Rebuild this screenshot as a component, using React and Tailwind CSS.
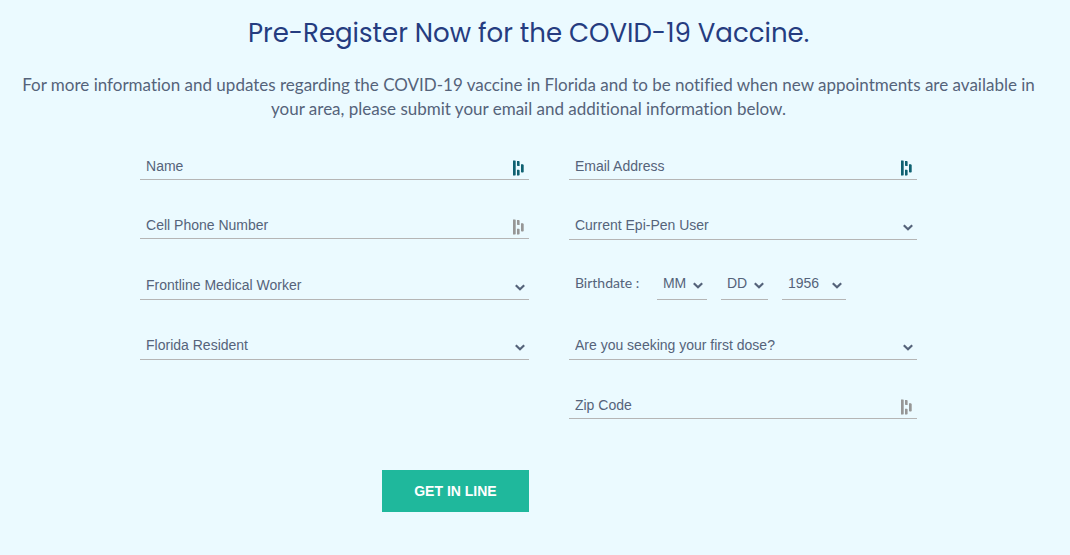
import React from 'react';

const fieldStyles =
  'w-full appearance-none rounded-none border-b border-[#b5b5b5] bg-transparent px-1.5 font-["Liberation_Sans",Arial,sans-serif] text-sm leading-5 text-[#55637a] outline-none placeholder:text-[#55637a] placeholder:opacity-100';

const AutofillIcon = ({ className = '' }) => (
  <svg
    viewBox="0 0 11 16"
    className={`pointer-events-none absolute h-4 w-[11px] ${className}`}
    fill="currentColor"
    aria-hidden="true"
  >
    <path d="M0 .4h2.2l.5.6v14l-.5.5H0z" />
    <path d="M4 .9h1.9l.7.7V6H4.6L4 5.4z" />
    <path d="M4 9.7h1.9l.7.5V15l-.7.5H4z" />
    <path d="M8 4.2h1.9l.8.7v7l-.7.6H8.6L8 11.9z" />
  </svg>
);

const ChevronIcon = ({ className = 'bottom-[9px]' }) => (
  <svg
    viewBox="0 0 10 7"
    className={`pointer-events-none absolute right-1 h-[7px] w-2.5 ${className}`}
    fill="none"
    stroke="#55637a"
    strokeWidth="2.2"
    aria-hidden="true"
  >
    <path d="M.8 1.2 5 5.2l4.2-4" />
  </svg>
);

const TextField = ({ label, type = 'text', active = false }) => (
  <div className="relative">
    <input
      type={type}
      aria-label={label}
      placeholder={label}
      className={`${fieldStyles} block h-7`}
    />
    <AutofillIcon
      className={`right-[5px] bottom-1 ${active ? 'text-[#0f6171]' : 'text-[#969696]'}`}
    />
  </div>
);

const SelectField = ({ label, options }) => (
  <div className="relative">
    <select aria-label={label} defaultValue="" className={`${fieldStyles} block h-[29px]`}>
      <option value="">{label}</option>
      {options.map((option) => (
        <option key={option}>{option}</option>
      ))}
    </select>
    <ChevronIcon />
  </div>
);

const DateSelect = ({ id, label, defaultValue, options, className }) => (
  <div className={`relative ${className}`}>
    <select
      id={id}
      aria-label={label}
      defaultValue={defaultValue}
      className={`${fieldStyles} block h-[33px]`}
    >
      {options.map((option) => (
        <option key={option}>{option}</option>
      ))}
    </select>
    <ChevronIcon className="bottom-[11px]" />
  </div>
);

const range = (start, end) =>
  Array.from({ length: end - start + 1 }, (_, i) => String(start + i));

const yesNo = ['Yes', 'No'];

const App = () => {
  const handleSubmit = (e) => e.preventDefault();

  return (
    <main className="min-h-screen bg-[#ebfaff] pt-[13px] pr-[13px] pb-10">
      <h1 className="text-center font-[Poppins,Inter,sans-serif] text-[26px] leading-10 text-[#253c80]">
        Pre-Register Now for the COVID-19 Vaccine.
      </h1>
      <p className="mt-5 px-3 text-center font-[Lato,sans-serif] text-[17px] leading-6 text-[#55637a] [font-variant-ligatures:no-common-ligatures]">
        For more information and updates regarding the COVID-19 vaccine in Florida and to be
        notified when new appointments are available in your area, please submit your email and
        additional information below.
      </p>

      <form
        onSubmit={handleSubmit}
        className="mx-auto mt-[31px] grid w-[73.5%] grid-cols-[19fr_17fr] items-start gap-x-10 gap-y-[31px]"
      >
        <TextField label="Name" active />
        <TextField label="Email Address" type="email" active />

        <TextField label="Cell Phone Number" type="tel" />
        <SelectField label="Current Epi-Pen User" options={yesNo} />

        <SelectField label="Frontline Medical Worker" options={yesNo} />
        <div role="group" aria-label="Birthdate" className="-mt-1 flex items-start">
          <label
            htmlFor="birth-month"
            className="w-[88px] pt-1.5 pl-1.5 font-[Lato,sans-serif] text-sm leading-5 text-[#55637a]"
          >
            Birthdate :
          </label>
          <DateSelect
            id="birth-month"
            label="Birthdate month"
            defaultValue="MM"
            options={['MM', ...range(1, 12)]}
            className="mr-3.5 w-[50px]"
          />
          <DateSelect
            id="birth-day"
            label="Birthdate day"
            defaultValue="DD"
            options={['DD', ...range(1, 31)]}
            className="mr-3.5 w-[47px]"
          />
          <DateSelect
            id="birth-year"
            label="Birthdate year"
            defaultValue="1956"
            options={range(1920, 2021)}
            className="w-16"
          />
        </div>

        <SelectField label="Florida Resident" options={yesNo} />
        <SelectField label="Are you seeking your first dose?" options={yesNo} />

        <div className="col-start-2">
          <TextField label="Zip Code" />
        </div>

        <button
          type="submit"
          className="col-start-1 mt-5 h-[42px] w-[147px] justify-self-end bg-[#1fb89c] font-['Liberation_Sans',Arial,sans-serif] text-sm font-bold text-white"
        >
          GET IN LINE
        </button>
      </form>
    </main>
  );
};

export default App;
